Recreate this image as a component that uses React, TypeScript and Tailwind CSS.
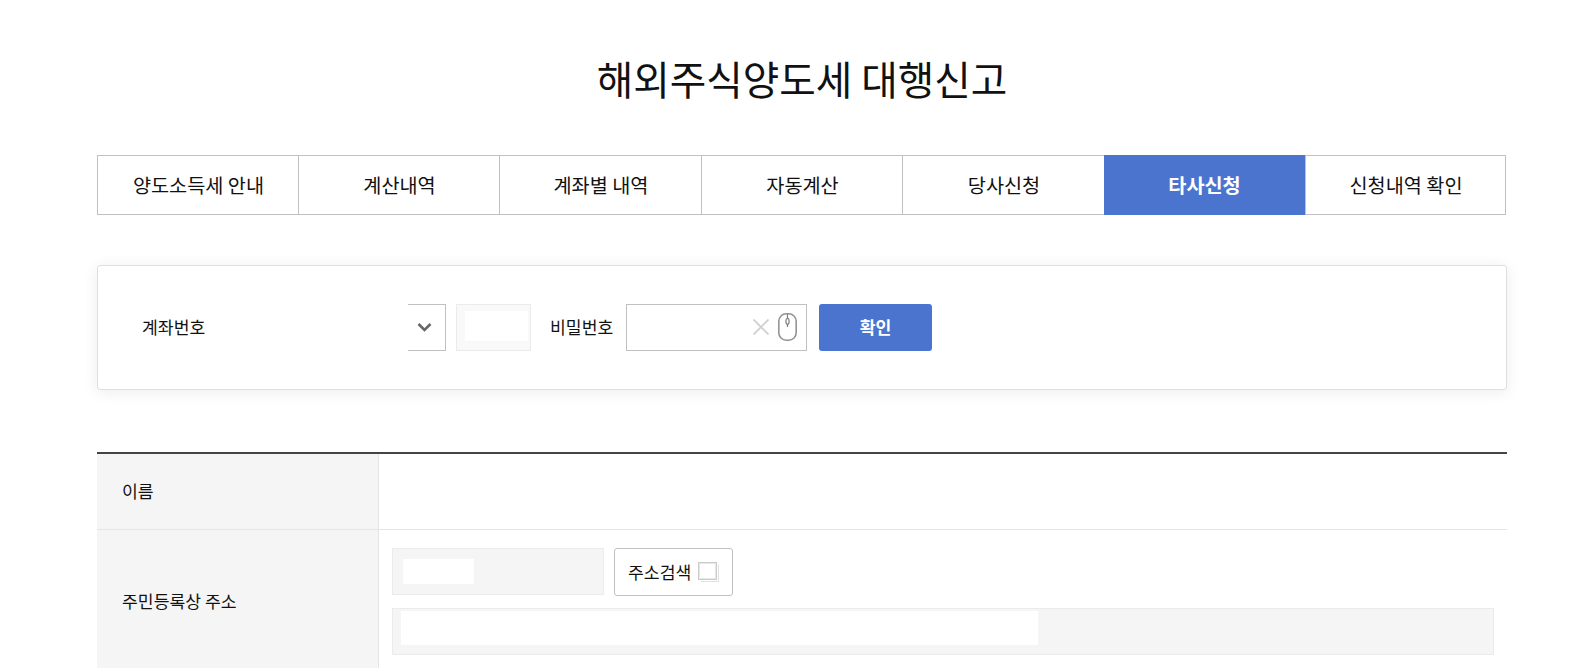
import React from "react";

const tabs = [
  { label: "양도소득세 안내", width: "w-[201px]" },
  { label: "계산내역", width: "w-[201px]" },
  { label: "계좌별 내역", width: "w-[202px]" },
  { label: "자동계산", width: "w-[201px]" },
  { label: "당사신청", width: "w-[202px]" },
  { label: "타사신청", width: "w-[201px]" },
  { label: "신청내역 확인", width: "w-[201px]" },
];

function Tabs({ active }: { active: number }) {
  return (
    <nav className="mt-[45px] flex h-[60px] text-[19.7px]">
      {tabs.map(({ label, width }, i) => (
        <button
          key={label}
          className={
            i === active
              ? `${width} bg-[#4b74cf] pb-px font-bold text-white`
              : `${width} border-y border-l border-[#c0c0c0] bg-white pb-px pl-px text-[#111] last:border-r`
          }
        >
          {label}
        </button>
      ))}
    </nav>
  );
}

function ChevronIcon() {
  return (
    <svg width="15" height="11" viewBox="0 0 15 11" fill="none" stroke="#666" strokeWidth="2.6">
      <path d="M1.5 2 7.5 8 13.5 2" />
    </svg>
  );
}

function ClearIcon() {
  return (
    <svg className="mb-px" width="16" height="16" viewBox="0 0 16 16" fill="none" stroke="#cfcfcf" strokeWidth="1.8">
      <path d="M.5.5 15.5 15.5M15.5.5.5 15.5" />
    </svg>
  );
}

function MouseIcon() {
  return (
    <svg className="mb-px" width="19" height="28" viewBox="0 0 19 28" fill="none" stroke="#939393" strokeWidth="1.6">
      <rect x=".8" y=".8" width="17.4" height="26.4" rx="7.5" />
      <path d="M9.5 1v4.500M9.500 11v3" stroke="#808080" strokeWidth="1.200" />
      <ellipse cx="9.5" cy="8.3" rx="1.6" ry="3" stroke="#808080" strokeWidth="1.2" />
    </svg>
  );
}

function PopupIcon() {
  return (
    <svg width="21" height="20" viewBox="0 0 21 20" fill="none">
      <path d="M3 19.5h17.500V2.500" stroke="#e0e0e0" />
      <rect x=".5" y=".5" width="18" height="17" fill="#fff" stroke="#cacaca" />
      <path d="M1.500 16.500h16V1.500h-16z" stroke="#e8e8e8" />
    </svg>
  );
}

function AccountForm() {
  return (
    <section className="mt-[50px] flex h-[125px] items-center rounded-[3px] border border-[#dfdfdf] bg-white pl-11 text-[17.2px] text-[#111] shadow-[0_2px_15px_rgba(0,0,0,0.08)]">
      <label className="w-[266px] pb-0.5">계좌번호</label>
      <div className="flex h-[47px] w-[38px] items-center border-y border-r border-[#c0c0c0] pl-[9px]">
        <ChevronIcon />
      </div>
      <div className="ml-2.5 h-[47px] w-[75px] border border-[#ebebeb] bg-[#f9f9f9] pt-1.5 pl-2">
        <div className="h-[30px] w-[63px] bg-white" />
      </div>
      <label className="ml-[19px] w-[76px] pb-0.5">비밀번호</label>
      <div className="flex h-[47px] w-[181px] items-center justify-end gap-[9px] border border-[#c0c0c0] pr-[9px]">
        <ClearIcon />
        <MouseIcon />
      </div>
      <button className="ml-3 h-[47px] w-[113px] rounded-[3px] bg-[#4b74cf] pb-0.5 font-bold text-white">
        확인
      </button>
    </section>
  );
}

function InfoTable() {
  return (
    <section className="mt-[62px] border-t-2 border-[#444] text-[17.2px] text-[#111]">
      <div className="flex h-[76px] border-b border-[#e5e5e5]">
        <div className="flex w-[282px] items-center border-r border-[#e5e5e5] bg-[#f5f5f5] pb-0.5 pl-[25px]">
          이름
        </div>
      </div>
      <div className="flex h-[138px] overflow-hidden">
        <div className="w-[282px] border-r border-[#e5e5e5] bg-[#f5f5f5] pt-[58px] pl-[25px]">
          주민등록상 주소
        </div>
        <div className="flex flex-1 flex-col gap-3 pt-[18px] pr-[13px] pl-[13px]">
          <div className="flex h-12 gap-2.5">
            <div className="h-[47px] w-[212px] border border-[#ebebeb] bg-[#f5f5f5] pt-2.5 pl-2.5">
              <div className="h-[25px] w-[71px] bg-white" />
            </div>
            <button className="flex h-12 w-[119px] items-center gap-1.5 rounded-[3px] border border-[#c0c0c0] bg-white pl-[13px]">
              <span className="w-16 pb-px text-left">주소검색</span>
              <PopupIcon />
            </button>
          </div>
          <div className="h-[47px] border border-[#ebebeb] bg-[#f5f5f5] pt-0.5 pl-2">
            <div className="h-[34px] w-[637px] bg-white" />
          </div>
        </div>
      </div>
    </section>
  );
}

export default function App() {
  return (
    <main className="h-[668px] overflow-hidden bg-white pl-[97px] font-['Noto_Sans_CJK_KR','Noto_Sans',sans-serif] leading-normal">
      <div className="w-[1410px]">
        <h1 className="pt-[48px] pb-0.5 text-center text-[39.7px] leading-[60px] text-[#111]">
          해외주식양도세 대행신고
        </h1>
        <Tabs active={5} />
        <AccountForm />
        <InfoTable />
      </div>
    </main>
  );
}
